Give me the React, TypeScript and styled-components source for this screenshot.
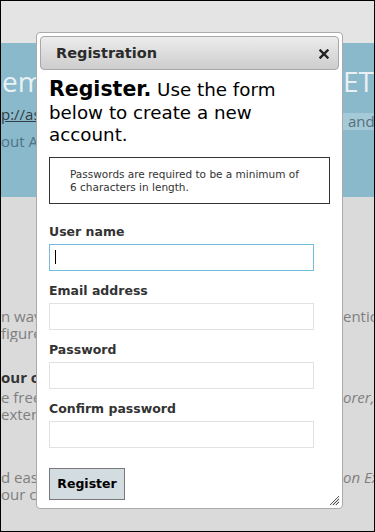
import React from "react";
import styled, { createGlobalStyle } from "styled-components";

const GlobalStyle = createGlobalStyle`
  html, body { margin: 0; padding: 0; }
  body { font-family: "DejaVu Sans", Verdana, sans-serif; background: #fff; }
  * { box-sizing: border-box; }
`;

const Frame = styled.div`
  position: relative;
  width: 375px;
  height: 532px;
  border: 1px solid #000;
  overflow: hidden;
  display: flex;
  flex-direction: column;
  font-family: "Open Sans", "Liberation Sans", sans-serif;
`;

const Header = styled.div`
  height: 42px;
  background: #e4e4e4;
  flex: none;
`;

const Featured = styled.div`
  height: 154px;
  flex: none;
  background: #8ab9cc;
  display: flex;
  justify-content: space-between;
`;

const SideColumn = styled.div<{ $w: number }>`
  width: ${(p) => p.$w}px;
  display: flex;
  flex-direction: column;
  overflow: hidden;
  white-space: nowrap;
`;

const BigTitle = styled.div<{ $pad?: number }>`
  margin-top: 21px;
  font-size: 28px;
  line-height: 34px;
  color: #eaf1f4;
  padding-left: ${(p) => p.$pad ?? 0}px;
`;

const BandText = styled.div<{ $mt: number; $color: string; $underline?: boolean; $pad?: number; $bg?: string; $h?: number }>`
  margin-top: ${(p) => p.$mt}px;
  font-size: 15px;
  line-height: ${(p) => p.$h ?? 20}px;
  color: ${(p) => p.$color};
  text-decoration: ${(p) => (p.$underline ? "underline" : "none")};
  padding-left: ${(p) => p.$pad ?? 0}px;
  background: ${(p) => p.$bg ?? "transparent"};
`;

const Main = styled.div`
  flex: 1;
  background: #dadada;
  display: flex;
  flex-direction: column;
`;

const Block = styled.div<{ $mt: number }>`
  margin-top: ${(p) => p.$mt}px;
`;

const Line = styled.div<{ $bold?: boolean }>`
  display: flex;
  justify-content: space-between;
  font-size: 15px;
  line-height: 17px;
  white-space: nowrap;
  font-weight: ${(p) => (p.$bold ? 700 : 400)};
  color: ${(p) => (p.$bold ? "#333" : "#7f7f7f")};
`;

const LeftFrag = styled.span`
  width: 35px;
  overflow: hidden;
`;

const RightFrag = styled.span<{ $italic?: boolean }>`
  width: 32px;
  overflow: hidden;
  padding-left: 1px;
  font-style: ${(p) => (p.$italic ? "italic" : "normal")};
  color: #7f7f7f;
`;

/* ---------- Dialog ---------- */

const Dialog = styled.div`
  position: absolute;
  top: 31px;
  left: 35px;
  width: 307px;
  height: 477px;
  background: #fff;
  border: 1px solid #aaa;
  border-radius: 4px;
  padding: 3px;
  display: flex;
  flex-direction: column;
  font-family: "DejaVu Sans", Verdana, sans-serif;
  z-index: 10;
`;

const TitleBar = styled.div`
  height: 34px;
  flex: none;
  border: 1px solid #a8a8a8;
  border-radius: 4px;
  background: linear-gradient(#ececec, #cdcdcd);
  display: flex;
  align-items: center;
  justify-content: space-between;
  padding: 0 9px 0 15px;
`;

const Title = styled.span`
  font-size: 14.5px;
  font-weight: 700;
  color: #2b2b2b;
`;

const CloseButton = styled.span`
  display: flex;
  width: 10px;
  height: 10px;
  margin-top: 2px;
`;

const Content = styled.div`
  padding: 8px 8px 0 9px;
  display: flex;
  flex-direction: column;
  align-items: flex-start;
`;

const Heading = styled.div`
  width: 280px;
  font-size: 18.3px;
  line-height: 22.5px;
  color: #000;
`;

const Strong = styled.span`
  font-size: 20.5px;
  font-weight: 700;
`;

const Note = styled.div`
  margin-top: 10px;
  width: 281px;
  border: 1px solid #333;
  padding: 10px 24px 9px 20px;
  font-size: 10.5px;
  line-height: 13px;
  color: #333;
`;

const Form = styled.form`
  margin-top: 20px;
  display: flex;
  flex-direction: column;
  gap: 12px;
`;

const Field = styled.div`
  display: flex;
  flex-direction: column;
`;

const Label = styled.label`
  font-size: 12.5px;
  font-weight: 700;
  line-height: 16px;
  color: #333;
  margin-bottom: 4px;
`;

const InputWrap = styled.div<{ $focused?: boolean }>`
  position: relative;
  width: 265px;
  height: 27px;
  &::after {
    content: "";
    display: ${(p) => (p.$focused ? "block" : "none")};
    position: absolute;
    left: 6px;
    top: 6px;
    width: 1px;
    height: 14px;
    background: #000;
  }
`;

const Input = styled.input<{ $focused?: boolean }>`
  width: 100%;
  height: 100%;
  border: 1px solid ${(p) => (p.$focused ? "#72bddb" : "#e2e2e2")};
  outline: none;
  padding: 0 6px;
  font-family: "DejaVu Sans", sans-serif;
  font-size: 12px;
  background: #fff;
`;

const Button = styled.button`
  margin-top: 20px;
  height: 32px;
  width: 76px;
  background: #d3dce0;
  border: 1px solid #787878;
  padding: 0;
  font-family: "DejaVu Sans", Verdana, sans-serif;
  font-size: 12.5px;
  font-weight: 700;
  color: #000;
`;

const Grip = styled.span`
  position: absolute;
  right: 2px;
  bottom: 2px;
  width: 12px;
  height: 12px;
  display: flex;
`;

const fields = [
  { label: "User name", type: "text", focused: true },
  { label: "Email address", type: "email" },
  { label: "Password", type: "password" },
  { label: "Confirm password", type: "password" },
];

export default function App() {
  return (
    <>
      <GlobalStyle />
      <Frame>
        <Header />
        <Featured>
          <SideColumn $w={35}>
            <BigTitle $pad={1}>emp</BigTitle>
            <BandText $mt={6} $color="#2f3d44" $underline>p://asp</BandText>
            <BandText $mt={7} $color="#4f7484">out AS</BandText>
          </SideColumn>
          <SideColumn $w={32}>
            <BigTitle $pad={1}>ET</BigTitle>
            <BandText $mt={15} $h={17} $color="#56707c" $pad={6} $bg="#a4c9d7">and</BandText>
          </SideColumn>
        </Featured>
        <Main>
          <Block $mt={111}>
            <Line>
              <LeftFrag>n way</LeftFrag>
              <RightFrag>entica</RightFrag>
            </Line>
            <Line>
              <LeftFrag>figure</LeftFrag>
            </Line>
          </Block>
          <Block $mt={27}>
            <Line $bold>
              <LeftFrag>our c</LeftFrag>
            </Line>
          </Block>
          <Block $mt={3}>
            <Line>
              <LeftFrag>e free</LeftFrag>
              <RightFrag $italic>orer, r</RightFrag>
            </Line>
            <Line>
              <LeftFrag>exten</LeftFrag>
            </Line>
          </Block>
          <Block $mt={46}>
            <Line>
              <LeftFrag>d easi</LeftFrag>
              <RightFrag $italic>on Ex</RightFrag>
            </Line>
            <Line>
              <LeftFrag>our c</LeftFrag>
            </Line>
          </Block>
        </Main>

        <Dialog>
          <TitleBar>
            <Title>Registration</Title>
            <CloseButton>
              <svg width="10" height="10" viewBox="0 0 10 10">
                <path d="M1.5 1.5 L8.5 8.5 M8.5 1.5 L1.5 8.5" stroke="#222" strokeWidth="2.4" strokeLinecap="square" />
              </svg>
            </CloseButton>
          </TitleBar>
          <Content>
            <Heading>
              <Strong>Register.</Strong> Use the form below to create a new account.
            </Heading>
            <Note>Passwords are required to be a minimum of 6 characters in length.</Note>
            <Form onSubmit={(e) => e.preventDefault()}>
              {fields.map((f) => (
                <Field key={f.label}>
                  <Label>{f.label}</Label>
                  <InputWrap $focused={f.focused}>
                    <Input type={f.type} $focused={f.focused} />
                  </InputWrap>
                </Field>
              ))}
            </Form>
            <Button type="button">Register</Button>
          </Content>
          <Grip>
            <svg width="12" height="12" viewBox="0 0 12 12">
              <path d="M11 2 L2 11 M11 5 L5 11 M11 8 L8 11" stroke="#555" strokeWidth="1" />
              <path d="M11.5 3.5 L3.5 11.5 M11.5 6.5 L6.5 11.5" stroke="#bbb" strokeWidth="0.8" />
            </svg>
          </Grip>
        </Dialog>
      </Frame>
    </>
  );
}
